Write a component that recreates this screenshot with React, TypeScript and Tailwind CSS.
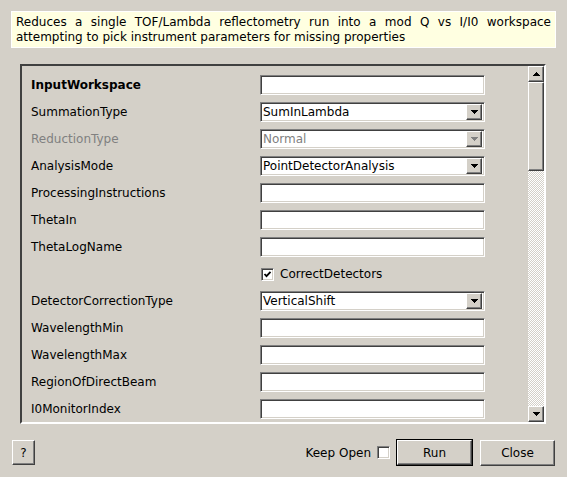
import React from "react";

const FACE = "bg-[#d4d0c8]";
const sunken =
  "border border-t-[#808080] border-l-[#808080] border-b-white border-r-white shadow-[inset_1px_1px_0_#404040,inset_-1px_-1px_0_#d4d0c8]";
const raised =
  "border border-t-white border-l-white border-b-[#404040] border-r-[#404040] shadow-[inset_-1px_-1px_0_#808080]";

type Row =
  | { kind: "text"; label: string; bold?: boolean }
  | { kind: "combo"; label: string; value: string; disabled?: boolean }
  | { kind: "check"; label: string };

const rows: Row[] = [
  { kind: "text", label: "InputWorkspace", bold: true },
  { kind: "combo", label: "SummationType", value: "SumInLambda" },
  { kind: "combo", label: "ReductionType", value: "Normal", disabled: true },
  { kind: "combo", label: "AnalysisMode", value: "PointDetectorAnalysis" },
  { kind: "text", label: "ProcessingInstructions" },
  { kind: "text", label: "ThetaIn" },
  { kind: "text", label: "ThetaLogName" },
  { kind: "check", label: "CorrectDetectors" },
  { kind: "combo", label: "DetectorCorrectionType", value: "VerticalShift" },
  { kind: "text", label: "WavelengthMin" },
  { kind: "text", label: "WavelengthMax" },
  { kind: "text", label: "RegionOfDirectBeam" },
  { kind: "text", label: "I0MonitorIndex" },
  { kind: "text", label: "I0MonitorIndex2" },
];

function Arrow({ up, disabled }: { up?: boolean; disabled?: boolean }) {
  const fill = disabled ? "#808080" : "#000";
  return (
    <svg width="7" height="4" viewBox="0 0 7 4" shapeRendering="crispEdges" className={up ? "rotate-180" : ""}>
      <path d="M0 0h7v1H0z M1 1h5v1H1z M2 2h3v1H2z M3 3h1v1H3z" fill={fill} />
    </svg>
  );
}

function CheckBox({ checked }: { checked?: boolean }) {
  return (
    <div className={`w-[13px] h-[13px] bg-white flex items-center justify-center ${sunken}`}>
      {checked && (
        <svg width="9" height="9" viewBox="0 0 9 9">
          <path d="M1.5 4 L3.5 6.2 L7.5 1.8" stroke="#000" strokeWidth="1.8" fill="none" />
        </svg>
      )}
    </div>
  );
}

function Field({ row }: { row: Row }) {
  if (row.kind === "check") {
    return (
      <div className="flex items-center gap-[6px] pl-[1px]">
        <CheckBox checked />
        <span>{row.label}</span>
      </div>
    );
  }
  if (row.kind === "combo") {
    return (
      <div className={`w-[225px] h-[20px] bg-white flex items-center justify-between pl-[2px] pr-[2px] ${sunken}`}>
        <span className={row.disabled ? "text-[#808080]" : "text-black"}>{row.value}</span>
        <div className={`w-[16px] h-[16px] ${FACE} flex items-center justify-center ${raised}`}>
          <Arrow disabled={row.disabled} />
        </div>
      </div>
    );
  }
  return <div className={`w-[225px] h-[20px] bg-white ${sunken}`} />;
}

export default function App() {
  return (
    <div
      className={`w-[567px] h-[477px] ${FACE} text-[12px] text-black flex flex-col overflow-hidden`}
      style={{ fontFamily: '"DejaVu Sans", "Liberation Sans", sans-serif' }}
    >
      {/* description */}
      <div className="mx-[11px] mt-[11px] h-[37px] bg-[#ffffe1] border border-white px-[4px] pt-[3px] leading-[15px] text-justify">
        Reduces a single TOF/Lambda reflectometry run into a mod Q vs I/I0 workspace attempting to pick instrument
        parameters for missing properties
      </div>

      {/* property frame */}
      <div className="ml-[20px] mr-[21px] mt-[16px] h-[360px] border-2 border-t-[#404040] border-l-[#404040] border-b-white border-r-white flex">
        <div className="flex-1 overflow-hidden pl-[9px] pt-[9px] flex flex-col gap-[7px]">
          {rows.map((row, i) => (
            <div key={i} className="flex items-center h-[20px] shrink-0">
              <div
                className={`w-[229px] shrink-0 ${row.kind === "text" && row.bold ? "font-bold" : ""} ${
                  row.kind === "combo" && row.disabled ? "text-[#808080]" : ""
                }`}
              >
                {row.kind === "check" ? "" : row.label.replace("I0MonitorIndex2", "")}
              </div>
              <Field row={row} />
            </div>
          ))}
        </div>
        {/* scrollbar */}
        <div className="w-[16px] flex flex-col">
          <div className={`h-[16px] ${FACE} flex items-center justify-center ${raised}`}>
            <Arrow up />
          </div>
          <div className={`h-[89px] ${FACE} ${raised}`} />
          <div className="flex-1 bg-[repeating-conic-gradient(#ffffff_0_25%,#d4d0c8_0_50%)] bg-[length:2px_2px]" />
          <div className={`h-[16px] ${FACE} flex items-center justify-center ${raised}`}>
            <Arrow />
          </div>
        </div>
      </div>

      {/* buttons */}
      <div className="flex items-center mt-[15px] ml-[12px] mr-[12px]">
        <div className={`w-[23px] h-[25px] flex items-center justify-center ${raised}`}>?</div>
        <div className="flex-1" />
        <span>Keep Open</span>
        <div className="ml-[6px]">
          <CheckBox />
        </div>
        <div className="ml-[6px] border border-black">
          <div className={`w-[75px] h-[25px] flex items-center justify-center ${raised}`}>Run</div>
        </div>
        <div className={`ml-[7px] w-[75px] h-[26px] flex items-center justify-center ${raised}`}>Close</div>
      </div>
    </div>
  );
}
